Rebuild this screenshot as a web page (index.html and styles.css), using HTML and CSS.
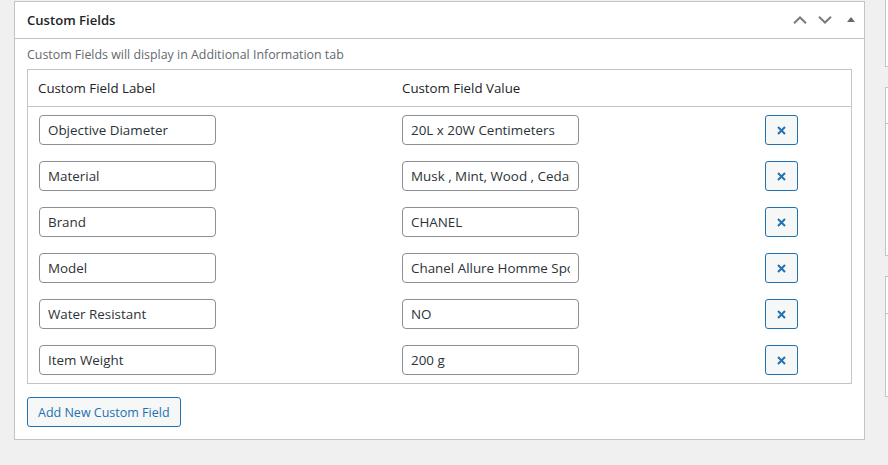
FILE: index.html
```html
<!DOCTYPE html>
<html lang="en">
<head>
<meta charset="utf-8">
<title>Custom Fields</title>
<link rel="stylesheet" href="styles.css">
</head>
<body>
<div class="page">
  <main class="main">
    <section class="postbox">
      <header class="postbox-header">
        <h2 class="postbox-title">Custom Fields</h2>
        <div class="handle-actions">
          <button class="handle" type="button" aria-label="Move up">
            <svg width="14" height="8" viewBox="0 0 14 8"><polyline points="1,7.2 7,1.5 13,7.2" fill="none" stroke="#787c82" stroke-width="2"/></svg>
          </button>
          <button class="handle" type="button" aria-label="Move down">
            <svg width="14" height="8" viewBox="0 0 14 8"><polyline points="1,0.8 7,6.5 13,0.8" fill="none" stroke="#787c82" stroke-width="2"/></svg>
          </button>
          <button class="handle handle-toggle" type="button" aria-label="Toggle panel">
            <svg width="8" height="5" viewBox="0 0 8 5"><polygon points="0,5 4,0 8,5" fill="#646970"/></svg>
          </button>
        </div>
      </header>
      <div class="inside">
        <p class="desc">Custom Fields will display in Additional Information tab</p>
        <div class="cf-table">
          <div class="cf-row cf-head">
            <div class="cf-cell">Custom Field Label</div>
            <div class="cf-cell">Custom Field Value</div>
            <div class="cf-cell"></div>
          </div>
          <div class="cf-body">
            <div class="cf-row">
              <div class="cf-cell"><input class="cf-input" type="text" value="Objective Diameter"></div>
              <div class="cf-cell"><input class="cf-input" type="text" value="20L x 20W Centimeters"></div>
              <div class="cf-cell"><button class="remove-btn" type="button" aria-label="Remove"><svg width="9" height="9" viewBox="0 0 9 9"><path d="M1 1L8 8M8 1L1 8" stroke="#2271b1" stroke-width="2"/></svg></button></div>
            </div>
            <div class="cf-row">
              <div class="cf-cell"><input class="cf-input" type="text" value="Material"></div>
              <div class="cf-cell"><input class="cf-input" type="text" value="Musk , Mint, Wood , Cedar"></div>
              <div class="cf-cell"><button class="remove-btn" type="button" aria-label="Remove"><svg width="9" height="9" viewBox="0 0 9 9"><path d="M1 1L8 8M8 1L1 8" stroke="#2271b1" stroke-width="2"/></svg></button></div>
            </div>
            <div class="cf-row">
              <div class="cf-cell"><input class="cf-input" type="text" value="Brand"></div>
              <div class="cf-cell"><input class="cf-input" type="text" value="CHANEL"></div>
              <div class="cf-cell"><button class="remove-btn" type="button" aria-label="Remove"><svg width="9" height="9" viewBox="0 0 9 9"><path d="M1 1L8 8M8 1L1 8" stroke="#2271b1" stroke-width="2"/></svg></button></div>
            </div>
            <div class="cf-row">
              <div class="cf-cell"><input class="cf-input" type="text" value="Model"></div>
              <div class="cf-cell"><input class="cf-input" type="text" value="Chanel Allure Homme Sport"></div>
              <div class="cf-cell"><button class="remove-btn" type="button" aria-label="Remove"><svg width="9" height="9" viewBox="0 0 9 9"><path d="M1 1L8 8M8 1L1 8" stroke="#2271b1" stroke-width="2"/></svg></button></div>
            </div>
            <div class="cf-row">
              <div class="cf-cell"><input class="cf-input" type="text" value="Water Resistant"></div>
              <div class="cf-cell"><input class="cf-input" type="text" value="NO"></div>
              <div class="cf-cell"><button class="remove-btn" type="button" aria-label="Remove"><svg width="9" height="9" viewBox="0 0 9 9"><path d="M1 1L8 8M8 1L1 8" stroke="#2271b1" stroke-width="2"/></svg></button></div>
            </div>
            <div class="cf-row">
              <div class="cf-cell"><input class="cf-input" type="text" value="Item Weight"></div>
              <div class="cf-cell"><input class="cf-input" type="text" value="200 g"></div>
              <div class="cf-cell"><button class="remove-btn" type="button" aria-label="Remove"><svg width="9" height="9" viewBox="0 0 9 9"><path d="M1 1L8 8M8 1L1 8" stroke="#2271b1" stroke-width="2"/></svg></button></div>
            </div>
          </div>
        </div>
        <button class="add-btn" type="button">Add New Custom Field</button>
      </div>
    </section>
  </main>
  <aside class="side">
    <div class="side-box side-box-first"></div>
    <div class="side-box side-box-tall"><div class="side-box-head"></div></div>
    <div class="side-box side-box-short"><div class="side-box-head side-box-head-short"></div></div>
  </aside>
</div>
</body>
</html>
```
FILE: styles.css
```css
* {
  box-sizing: border-box;
}

html, body {
  margin: 0;
  padding: 0;
  background: #f0f0f1;
}

body {
  font-family: "Open Sans", "Noto Sans", "Liberation Sans", sans-serif;
  color: #1d2327;
  font-size: 13px;
  overflow: hidden;
}

.page {
  display: flex;
  gap: 20px;
  align-items: flex-start;
}

.main {
  padding: 1px 0 0 14px;
  flex: 0 0 auto;
}

.postbox {
  width: 851px;
  background: #fff;
  border: 1px solid #c3c4c7;
}

.postbox-header {
  height: 37px;
  border-bottom: 1px solid #c3c4c7;
  display: flex;
  align-items: center;
  justify-content: space-between;
  padding-left: 12px;
}

.postbox-title {
  margin: 0;
  font-size: 13.1px;
  font-weight: 600;
  color: #1d2327;
}

.handle-actions {
  display: flex;
  align-items: center;
  height: 100%;
}

.handle {
  width: 25px;
  height: 36px;
  border: 0;
  background: transparent;
  padding: 0;
  display: flex;
  align-items: center;
  justify-content: center;
  cursor: pointer;
}

.handle-toggle {
  width: 27px;
  padding-bottom: 1px;
}

.inside {
  padding: 0 12px 12px;
}

.desc {
  margin: 6px 0 4px;
  line-height: 20px;
  height: 20px;
  font-size: 12.4px;
  color: #646970;
  white-space: nowrap;
}

.cf-table {
  border: 1px solid #c3c4c7;
}

.cf-row {
  display: grid;
  grid-template-columns: 363px 363px 1fr;
}

.cf-head {
  height: 37px;
  border-bottom: 1px solid #c3c4c7;
  align-items: center;
  font-size: 13.3px;
  color: #1d2327;
}

.cf-head .cf-cell {
  padding-left: 10px;
}

.cf-head .cf-cell:nth-child(2) {
  padding-left: 11px;
}

.cf-body {
  padding: 8px 0 8px;
  display: flex;
  flex-direction: column;
  gap: 16px;
}

.cf-body .cf-cell {
  padding-left: 11px;
  height: 30px;
}

.cf-input {
  display: block;
  width: 177px;
  height: 30px;
  margin: 0;
  padding: 0 8px;
  border: 1px solid #8c8f94;
  border-radius: 4px;
  background: #fff;
  color: #2c3338;
  font-family: "Open Sans", "Noto Sans", "Liberation Sans", sans-serif;
  font-size: 13.4px;
  outline: none;
}

.remove-btn {
  width: 33px;
  height: 30px;
  border: 1px solid #2271b1;
  border-radius: 3px;
  background: #f6f7f7;
  padding: 0;
  display: flex;
  align-items: center;
  justify-content: center;
  cursor: pointer;
}

.add-btn {
  display: block;
  margin-top: 13px;
  height: 30px;
  padding: 0 10px;
  border: 1px solid #2271b1;
  border-radius: 3px;
  background: #f6f7f7;
  color: #2271b1;
  font-family: "Open Sans", "Noto Sans", "Liberation Sans", sans-serif;
  font-size: 12.5px;
  cursor: pointer;
}

.side {
  flex: 1 1 auto;
  display: flex;
  flex-direction: column;
  gap: 20px;
}

.side-box {
  background: #fff;
  border: 1px solid #c3c4c7;
  border-right: 0;
}

.side-box-first {
  height: 67px;
  border-top: 0;
}

.side-box-tall {
  height: 169px;
}

.side-box-short {
  height: 121px;
}

.side-box-head {
  height: 36px;
  border-bottom: 1px solid #c3c4c7;
}

.side-box-head-short {
  height: 37px;
}
```
